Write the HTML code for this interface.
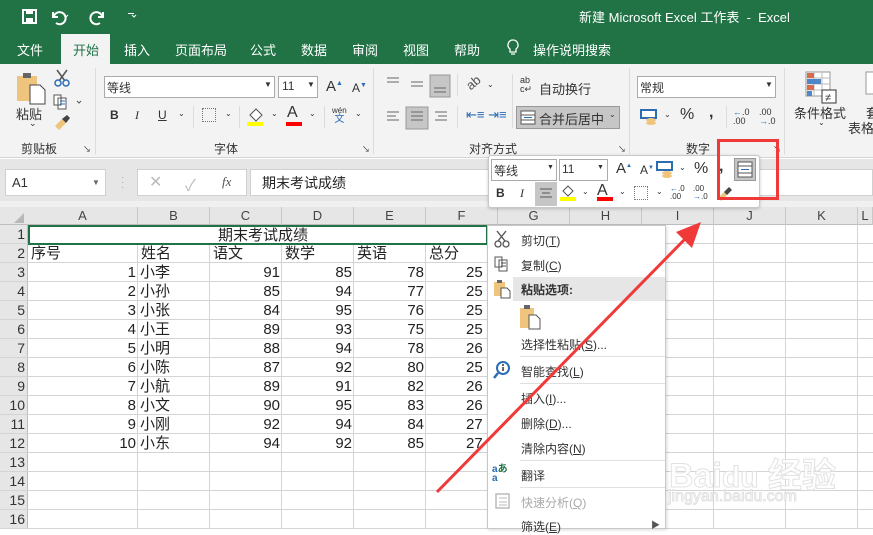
<!DOCTYPE html>
<html><head><meta charset="utf-8"><style>
*{margin:0;padding:0;box-sizing:border-box}
body{width:873px;height:529px;overflow:hidden;position:relative;background:#fff;font-family:"Liberation Sans","Noto Sans CJK SC",sans-serif;color:#222}
.a{position:absolute;white-space:nowrap}
.t{font-size:12px;color:#fff}
.r{font-size:12px;color:#333}
.c{font-size:15px;color:#222;line-height:19px}
.n{text-align:right}
.hl{position:absolute;background:#d4d4d4}
.m{font-size:12px;color:#333}
.sep{position:absolute;background:#dcdcdc;width:1px}
</style></head><body>
<!-- title bar -->
<div class="a" style="left:0;top:0;width:873px;height:64px;background:#217346"></div>
<svg class="a" style="left:20px;top:7px" width="120" height="20"><rect x="3" y="3" width="13" height="13" fill="none" stroke="#fff" stroke-width="2"/><rect x="6" y="3" width="7" height="4" fill="#fff"/><rect x="6" y="11" width="7" height="5" fill="#fff"/><path d="M34 9a6 6 0 1 1 2 7M33 5v5h5" fill="none" stroke="#fff" stroke-width="2"/><path d="M44 8l2 2 2-2" stroke="#fff" fill="none"/><path d="M82 9a6 6 0 1 0-2 7M83 5v5h-5" fill="none" stroke="#fff" stroke-width="2"/><path d="M112 8l2 2 2-2" stroke="#fff" fill="none"/><path d="M131 10l3 3 3-3" stroke="#fff" fill="none"/></svg>
<div class="a" style="left:128px;top:13px;width:6px;height:1px;background:#fff"></div>
<div class="a t" style="left:579px;top:7px;font-size:13px">新建 Microsoft Excel 工作表&nbsp; - &nbsp;Excel</div>
<div class="a" style="left:61px;top:34px;width:49px;height:30px;background:#f3f3f3"></div>
<div class="a t" style="left:17px;top:40px;font-size:13px">文件</div>
<div class="a" style="left:73px;top:40px;font-size:13px;color:#217346">开始</div>
<div class="a t" style="left:124px;top:40px;font-size:13px">插入</div>
<div class="a t" style="left:175px;top:40px;font-size:13px">页面布局</div>
<div class="a t" style="left:250px;top:40px;font-size:13px">公式</div>
<div class="a t" style="left:301px;top:40px;font-size:13px">数据</div>
<div class="a t" style="left:352px;top:40px;font-size:13px">审阅</div>
<div class="a t" style="left:403px;top:40px;font-size:13px">视图</div>
<div class="a t" style="left:454px;top:40px;font-size:13px">帮助</div>
<svg class="a" style="left:506px;top:38px" width="14" height="20"><path d="M7 2a5 5 0 0 0-3 9v3h6v-3a5 5 0 0 0-3-9zM5 16h4" fill="none" stroke="#fff" stroke-width="1.3"/></svg>
<div class="a t" style="left:533px;top:40px;font-size:13px">操作说明搜索</div>
<!-- ribbon -->
<div class="a" style="left:0;top:64px;width:873px;height:94px;background:#f3f3f3;border-bottom:1px solid #d5d5d5"></div>
<svg class="a" style="left:15px;top:70px" width="32" height="36"><rect x="2" y="6" width="20" height="25" fill="#efc57e"/><rect x="8" y="3" width="8" height="5" fill="#666"/><path d="M15 15h10l5 5v14H15z" fill="#fff" stroke="#444"/></svg>
<div class="a r" style="left:16px;top:104px;font-size:13px">粘贴</div>
<div class="a r" style="left:29px;top:118px;font-size:9px">⌄</div>
<svg class="a" style="left:52px;top:68px" width="20" height="20"><path d="M5 2l8 11M15 2L7 13" stroke="#555" stroke-width="1.5"/><circle cx="6" cy="15" r="3" fill="none" stroke="#2b6cb5" stroke-width="1.5"/><circle cx="14" cy="15" r="3" fill="none" stroke="#2b6cb5" stroke-width="1.5"/></svg>
<svg class="a" style="left:52px;top:93px" width="30" height="18"><path d="M2 2h7v10H2zM6 5h8v11H6z" fill="#fff" stroke="#555"/><path d="M8 8h5M8 11h5" stroke="#2b6cb5"/><path d="M25 8l2 2 2-2" stroke="#555" fill="none"/></svg>
<svg class="a" style="left:52px;top:114px" width="20" height="18"><path d="M3 12l7-7 4 4-7 7z" fill="#efc57e"/><path d="M10 5l5-4 3 3-4 5z" fill="#444"/></svg>
<div class="a r" style="left:21px;top:140px">剪贴板</div>
<div class="a r" style="left:83px;top:144px;font-size:8px">↘</div>
<div class="sep" style="left:95px;top:68px;height:86px"></div>
<div class="a" style="left:104px;top:76px;width:171px;height:22px;background:#fff;border:1px solid #ababab"></div>
<div class="a r" style="left:107px;top:79px">等线</div>
<div class="a r" style="left:264px;top:80px;font-size:8px">▼</div>
<div class="a" style="left:278px;top:76px;width:40px;height:22px;background:#fff;border:1px solid #ababab"></div>
<div class="a r" style="left:282px;top:79px">11</div>
<div class="a r" style="left:307px;top:80px;font-size:8px">▼</div>
<div class="a r" style="left:326px;top:78px;font-size:15px">A<sup style="font-size:7px;color:#2b6cb5">▲</sup></div>
<div class="a r" style="left:352px;top:81px;font-size:12px">A<sup style="font-size:7px;color:#2b6cb5">▼</sup></div>
<div class="a r" style="left:110px;top:108px;font-weight:bold">B</div>
<div class="a r" style="left:135px;top:108px;font-style:italic;font-family:'Liberation Serif'">I</div>
<div class="a r" style="left:158px;top:108px;text-decoration:underline">U</div>
<div class="a r" style="left:178px;top:109px;font-size:8px">⌄</div>
<div class="sep" style="left:193px;top:106px;height:22px"></div>
<div class="a" style="left:202px;top:108px;width:14px;height:14px;border:1px dotted #777"></div>
<div class="a r" style="left:225px;top:109px;font-size:8px">⌄</div>
<div class="sep" style="left:239px;top:106px;height:22px"></div>
<svg class="a" style="left:247px;top:106px" width="18" height="20"><path d="M3 9l6-6 6 6-6 6z" fill="#fff" stroke="#555"/></svg>
<div class="a" style="left:247px;top:122px;width:16px;height:4px;background:#ffff00"></div>
<div class="a r" style="left:271px;top:109px;font-size:8px">⌄</div>
<div class="a r" style="left:287px;top:104px;font-size:16px">A</div>
<div class="a" style="left:286px;top:122px;width:16px;height:4px;background:#f00"></div>
<div class="a r" style="left:309px;top:109px;font-size:8px">⌄</div>
<div class="sep" style="left:324px;top:106px;height:22px"></div>
<div class="a r" style="left:332px;top:106px;font-size:8px;line-height:9px;text-align:center">wén<br><span style="color:#2b6cb5;font-size:10px">文</span></div>
<div class="a r" style="left:355px;top:109px;font-size:8px">⌄</div>
<div class="a r" style="left:214px;top:140px">字体</div>
<div class="a r" style="left:362px;top:144px;font-size:8px">↘</div>
<div class="sep" style="left:373px;top:68px;height:86px"></div>
<svg class="a" style="left:384px;top:74px" width="70" height="56"><g stroke="#666"><path d="M3 4h12M3 8h12M27 8h12M27 12h12"/><rect x="46" y="1" width="20" height="22" fill="#c6c6c6" stroke="#999"/><path d="M50 14h12M50 18h12"/><path d="M3 38h12M3 42h9M3 46h12"/><rect x="22" y="33" width="22" height="22" fill="#c6c6c6" stroke="#999"/><path d="M27 38h12M27 42h12M27 46h12M51 38h12M54 42h9M51 46h12"/></g></svg>
<div class="sep" style="left:457px;top:74px;height:22px"></div>
<div class="sep" style="left:457px;top:106px;height:22px"></div>
<div class="a r" style="left:466px;top:75px;font-size:13px;color:#555;transform:rotate(-40deg)">ab</div>
<div class="a r" style="left:487px;top:80px;font-size:8px">⌄</div>
<div class="a" style="left:466px;top:107px;font-size:13px;color:#2b6cb5">⇤≡ ⇥≡</div>
<div class="sep" style="left:512px;top:74px;height:54px"></div>
<div class="a r" style="left:520px;top:76px;font-size:9px;line-height:9px">ab<br>c↵</div>
<div class="a r" style="left:539px;top:79px;font-size:13px">自动换行</div>
<div class="a" style="left:516px;top:106px;width:104px;height:23px;background:#c6c6c6;border:1px solid #999"></div>
<svg class="a" style="left:520px;top:110px" width="16" height="15"><rect x="1" y="1" width="14" height="13" fill="#fff" stroke="#555"/><path d="M1 5h14M1 10h14" stroke="#555"/><path d="M4 7.5h8" stroke="#2b6cb5"/></svg>
<div class="a r" style="left:539px;top:109px;font-size:13px">合并后居中</div>
<div class="a r" style="left:609px;top:110px;font-size:8px">⌄</div>
<div class="a r" style="left:469px;top:140px">对齐方式</div>
<div class="a r" style="left:618px;top:144px;font-size:8px">↘</div>
<div class="sep" style="left:629px;top:68px;height:86px"></div>
<div class="a" style="left:637px;top:76px;width:139px;height:22px;background:#fff;border:1px solid #ababab"></div>
<div class="a r" style="left:640px;top:79px">常规</div>
<div class="a r" style="left:765px;top:80px;font-size:8px">▼</div>
<svg class="a" style="left:640px;top:109px" width="20" height="16"><rect x="1" y="1" width="15" height="8" fill="#fff" stroke="#2b6cb5" stroke-width="2"/><ellipse cx="11" cy="11" rx="5" ry="2" fill="#efc57e"/><ellipse cx="11" cy="14" rx="5" ry="2" fill="#efc57e"/></svg>
<div class="a r" style="left:664px;top:110px;font-size:8px">⌄</div>
<div class="a r" style="left:680px;top:106px;font-size:16px">%</div>
<div class="a r" style="left:709px;top:104px;font-size:16px;font-weight:bold">,</div>
<div class="sep" style="left:726px;top:106px;height:22px"></div>
<div class="a" style="left:733px;top:108px;font-size:9px;line-height:9px;color:#333"><span style="color:#2b6cb5">←</span>.0<br>.00</div>
<div class="a" style="left:759px;top:108px;font-size:9px;line-height:9px;color:#333">.00<br><span style="color:#2b6cb5">→</span>.0</div>
<div class="a r" style="left:686px;top:140px">数字</div>
<div class="a r" style="left:773px;top:144px;font-size:8px">↘</div>
<div class="sep" style="left:784px;top:68px;height:86px"></div>
<svg class="a" style="left:805px;top:71px" width="34" height="34"><rect x="1" y="1" width="24" height="24" fill="#fff" stroke="#999"/><path d="M1 7h24M1 13h24M1 19h24M9 1v24M17 1v24" stroke="#bbb"/><rect x="2" y="2" width="7" height="5" fill="#d86b4b"/><rect x="2" y="8" width="14" height="5" fill="#4f86c6"/><rect x="2" y="14" width="7" height="5" fill="#d86b4b"/><rect x="2" y="20" width="5" height="5" fill="#4f86c6"/><rect x="17" y="19" width="14" height="13" fill="#fff" stroke="#333"/><text x="20" y="30" font-size="11" fill="#333">≠</text></svg>
<div class="a r" style="left:794px;top:103px;font-size:13px">条件格式</div>
<div class="a r" style="left:818px;top:118px;font-size:8px">⌄</div>
<svg class="a" style="left:865px;top:71px" width="10" height="24"><rect x="1" y="1" width="12" height="22" fill="#fff" stroke="#999"/></svg>
<div class="a r" style="left:866px;top:103px;font-size:13px">套</div>
<div class="a r" style="left:848px;top:118px;font-size:13px">表格</div>
<!-- formula bar -->
<div class="a" style="left:0;top:159px;width:873px;height:48px;background:#e6e6e6"></div>
<div class="a" style="left:5px;top:169px;width:101px;height:27px;background:#fff;border:1px solid #d0d0d0"></div>
<div class="a r" style="left:12px;top:175px;font-size:13px">A1</div>
<div class="a r" style="left:92px;top:178px;font-size:8px;color:#666">▼</div>
<div class="a" style="left:121px;top:175px;color:#aaa;font-size:10px;line-height:5px">·<br>·<br>·</div>
<div class="a" style="left:137px;top:169px;width:110px;height:27px;background:#fff;border:1px solid #d0d0d0"></div>
<div class="a" style="left:149px;top:172px;color:#bbb;font-size:16px">✕</div>
<div class="a" style="left:185px;top:172px;color:#bbb;font-size:16px">✓</div>
<div class="a" style="left:222px;top:174px;color:#555;font-size:13px;font-style:italic;font-family:'Liberation Serif'">fx</div>
<div class="a" style="left:250px;top:169px;width:623px;height:27px;background:#fff;border:1px solid #d0d0d0"></div>
<div class="a" style="left:262px;top:173px;font-size:14px;color:#222">期末考试成绩</div>
<!-- grid -->
<div class="a" style="left:0;top:201px;width:873px;height:6px;background:#f0f0f0"></div>
<div class="a" style="left:0;top:207px;width:873px;height:18px;background:#e6e6e6;border-bottom:1px solid #bdbdbd"></div>
<div class="a" style="left:0;top:225px;width:28px;height:304px;background:#e6e6e6;border-right:1px solid #bdbdbd"></div>
<svg class="a" style="left:12px;top:212px" width="14" height="12"><path d="M12 1v10H2z" fill="#b8b8b8"/></svg>
<div id="g"></div>
<div class="a" style="left:28px;top:225px;width:460px;height:20px;border:2px solid #217346;background:#fff"></div>
<div class="a c" style="left:218px;top:226px">期末考试成绩</div>
<!-- mini toolbar -->
<div class="a" style="left:488px;top:155px;width:272px;height:53px;background:#fff;border:1px solid #c8c8c8;border-radius:3px;box-shadow:0 1px 3px rgba(0,0,0,.2)"></div>
<div class="a" style="left:491px;top:159px;width:66px;height:22px;border:1px solid #ababab"></div>
<div class="a r" style="left:494px;top:162px">等线</div>
<div class="a r" style="left:547px;top:164px;font-size:7px">▼</div>
<div class="a" style="left:559px;top:159px;width:49px;height:22px;border:1px solid #ababab"></div>
<div class="a r" style="left:562px;top:162px">11</div>
<div class="a r" style="left:597px;top:164px;font-size:7px">▼</div>
<div class="a r" style="left:616px;top:160px;font-size:15px">A<sup style="font-size:6px;color:#2b6cb5">▲</sup></div>
<div class="a r" style="left:640px;top:163px;font-size:12px">A<sup style="font-size:6px;color:#2b6cb5">▼</sup></div>
<svg class="a" style="left:656px;top:161px" width="20" height="18"><rect x="1" y="1" width="15" height="8" fill="#fff" stroke="#2b6cb5" stroke-width="2"/><ellipse cx="11" cy="12" rx="5" ry="2" fill="#efc57e"/><ellipse cx="11" cy="15" rx="5" ry="2" fill="#efc57e"/></svg>
<div class="a r" style="left:679px;top:163px;font-size:8px">⌄</div>
<div class="a r" style="left:694px;top:160px;font-size:16px">%</div>
<div class="a r" style="left:719px;top:158px;font-size:16px;font-weight:bold">,</div>
<div class="a" style="left:734px;top:158px;width:22px;height:23px;background:#c6c6c6;border:1px solid #999"></div>
<svg class="a" style="left:737px;top:161px" width="16" height="17"><rect x="1" y="1" width="14" height="15" fill="#fff" stroke="#555"/><path d="M1 5h14M1 12h14" stroke="#555"/><path d="M4 8.5h8" stroke="#2b6cb5"/></svg>
<div class="a r" style="left:496px;top:186px;font-weight:bold">B</div>
<div class="a r" style="left:520px;top:186px;font-style:italic;font-family:'Liberation Serif'">I</div>
<div class="a" style="left:535px;top:182px;width:22px;height:24px;background:#c6c6c6"></div>
<svg class="a" style="left:538px;top:187px" width="16" height="12"><path d="M2 2h12M4 6h8M2 10h12" stroke="#555"/></svg>
<svg class="a" style="left:560px;top:183px" width="18" height="16"><path d="M3 8l5-5 5 5-5 5z" fill="#fff" stroke="#555"/></svg>
<div class="a" style="left:560px;top:197px;width:16px;height:4px;background:#ffff00"></div>
<div class="a r" style="left:582px;top:187px;font-size:8px">⌄</div>
<div class="a r" style="left:597px;top:182px;font-size:16px">A</div>
<div class="a" style="left:597px;top:197px;width:16px;height:4px;background:#f00"></div>
<div class="a r" style="left:619px;top:187px;font-size:8px">⌄</div>
<div class="a" style="left:634px;top:186px;width:14px;height:14px;border:1px dotted #777"></div>
<div class="a r" style="left:656px;top:187px;font-size:8px">⌄</div>
<div class="a" style="left:670px;top:185px;font-size:8px;line-height:8px;color:#333"><span style="color:#2b6cb5">←</span>.0<br>.00</div>
<div class="a" style="left:693px;top:185px;font-size:8px;line-height:8px;color:#333">.00<br><span style="color:#2b6cb5">→</span>.0</div>
<svg class="a" style="left:716px;top:184px" width="18" height="18"><path d="M2 14l6-6 3 3-6 6z" fill="#efc57e"/><path d="M8 8l5-5 3 3-5 5z" fill="#444"/></svg>
<!-- red box -->
<div class="a" style="left:717px;top:139px;width:62px;height:61px;border:3px solid #f03a3a"></div>
<!-- context menu -->
<div class="a" style="left:487px;top:225px;width:179px;height:304px;background:#fff;border:1px solid #c8c8c8;box-shadow:1px 1px 3px rgba(0,0,0,.15)"></div>
<div class="a" style="left:513px;top:277px;width:152px;height:24px;background:#e6e6e6"></div>
<svg class="a" style="left:493px;top:230px" width="18" height="18"><path d="M4 1l8 10M13 1L5 11" stroke="#555" stroke-width="1.4"/><circle cx="5" cy="14" r="3" fill="none" stroke="#555" stroke-width="1.3"/><circle cx="13" cy="14" r="3" fill="none" stroke="#555" stroke-width="1.3"/></svg>
<div class="a m" style="left:521px;top:232px">剪切(<u>T</u>)</div>
<svg class="a" style="left:493px;top:255px" width="18" height="18"><path d="M2 2h7v10H2zM6 5h8v11H6z" fill="#fff" stroke="#555"/><path d="M8 8h5M8 11h5" stroke="#555"/></svg>
<div class="a m" style="left:521px;top:257px">复制(<u>C</u>)</div>
<svg class="a" style="left:493px;top:279px" width="18" height="20"><rect x="1" y="3" width="11" height="14" fill="#efc57e"/><rect x="4" y="1" width="5" height="3" fill="#666"/><path d="M8 9h6l3 3v7H8z" fill="#fff" stroke="#555"/></svg>
<div class="a m" style="left:521px;top:281px;font-weight:bold">粘贴选项:</div>
<svg class="a" style="left:519px;top:304px" width="24" height="26"><rect x="1" y="4" width="14" height="20" fill="#efc57e"/><rect x="5" y="1" width="6" height="4" fill="#666"/><path d="M10 11h7l4 4v10H10z" fill="#fff" stroke="#555"/></svg>
<div class="a m" style="left:521px;top:336px">选择性粘贴(<u>S</u>)...</div>
<div class="a" style="left:520px;top:356px;width:145px;height:1px;background:#e0e0e0"></div>
<svg class="a" style="left:492px;top:360px" width="20" height="20"><circle cx="11" cy="8" r="6" fill="none" stroke="#2b6cb5" stroke-width="2"/><path d="M6 13l-4 5" stroke="#2b6cb5" stroke-width="2.5"/><path d="M11 7v4" stroke="#333" stroke-width="1.5"/><circle cx="11" cy="5" r="1" fill="#333"/></svg>
<div class="a m" style="left:521px;top:363px">智能查找(<u>L</u>)</div>
<div class="a" style="left:520px;top:383px;width:145px;height:1px;background:#e0e0e0"></div>
<div class="a m" style="left:521px;top:390px">插入(<u>I</u>)...</div>
<div class="a m" style="left:521px;top:415px">删除(<u>D</u>)...</div>
<div class="a m" style="left:521px;top:440px">清除内容(<u>N</u>)</div>
<div class="a" style="left:520px;top:460px;width:145px;height:1px;background:#e0e0e0"></div>
<div class="a" style="left:492px;top:465px;font-size:10px;line-height:9px;font-weight:bold"><span style="color:#2b6cb5">a</span><span style="color:#217346">あ</span><br><span style="color:#2b6cb5">a</span></div>
<div class="a m" style="left:521px;top:467px">翻译</div>
<div class="a" style="left:520px;top:487px;width:145px;height:1px;background:#e0e0e0"></div>
<svg class="a" style="left:493px;top:492px" width="18" height="18"><rect x="3" y="2" width="13" height="14" fill="none" stroke="#bbb" stroke-width="1.5"/><path d="M6 6h8M6 10h8M6 13h8" stroke="#bbb"/></svg>
<div class="a m" style="left:521px;top:494px;color:#aaa">快速分析(<u>Q</u>)</div>
<div class="a m" style="left:521px;top:518px">筛选(<u>E</u>)</div>
<div class="a" style="left:651px;top:518px;font-size:9px;color:#555">▶</div>
<!-- watermark -->
<div class="a" style="left:669px;top:448px;font-size:34px;font-weight:bold;color:rgba(255,255,255,.85);-webkit-text-stroke:1px #e2e2e2">Bai<span style="font-size:30px">du</span> 经验</div>
<div class="a" style="left:668px;top:488px;font-size:16px;color:rgba(255,255,255,.85);-webkit-text-stroke:1px #e2e2e2">jingyan.baidu.com</div>
<!-- arrow -->
<svg class="a" style="left:0;top:0" width="873" height="529"><path d="M437 492L686 238" stroke="#f03a3a" stroke-width="3"/><path d="M701 222L676 232L692 248z" fill="#f03a3a"/></svg>
<script>
var cols=[28,138,210,282,354,426,498,570,642,714,786,858,873];
var L="ABCDEFGHIJKL";
var h="";
for(var i=0;i<12;i++){var x=cols[i],w=cols[i+1]-x;
h+='<div class="a" style="left:'+x+'px;top:207px;width:'+w+'px;height:18px;text-align:center;font-size:13px;color:#444;line-height:18px;border-right:1px solid #c8c8c8">'+L[i]+'</div>';
if(i>0)h+='<div class="hl" style="left:'+(x-1)+'px;top:225px;width:1px;height:304px"></div>';}
for(var r=1;r<=16;r++){var y=225+(r-1)*19;
h+='<div class="a" style="left:0;top:'+y+'px;width:28px;height:19px;text-align:right;padding-right:3px;font-size:14px;color:#333;line-height:19px">'+r+'</div>';
h+='<div class="hl" style="left:0;top:'+(y+18)+'px;width:873px;height:1px"></div>';}
var d=[["序号","姓名","语文","数学","英语","总分"]];
var nm="李孙张王明陈航文刚东",v=[[91,85,78,254],[85,94,77,256],[84,95,76,255],[89,93,75,257],[88,94,78,260],[87,92,80,259],[89,91,82,262],[90,95,83,268],[92,94,84,270],[94,92,85,271]];
for(var c=0;c<6;c++)h+='<div class="a c" style="left:'+(cols[c]+3)+'px;top:244px">'+d[0][c]+'</div>';
for(var k=0;k<10;k++){var y=263+k*19;
h+='<div class="a c n" style="left:'+cols[0]+'px;top:'+y+'px;width:108px">'+(k+1)+'</div>';
h+='<div class="a c" style="left:'+(cols[1]+2)+'px;top:'+y+'px">小'+nm[k]+'</div>';
for(var j=0;j<4;j++)h+='<div class="a c n" style="left:'+cols[j+2]+'px;top:'+y+'px;width:70px;'+(j==3?'width:62px;overflow:hidden;left:426px;text-align:left;padding-left:40px':'')+'">'+(j==3?String(v[k][j]).slice(0,2):v[k][j])+'</div>';}
document.getElementById("g").innerHTML=h;
</script>
</body></html>
